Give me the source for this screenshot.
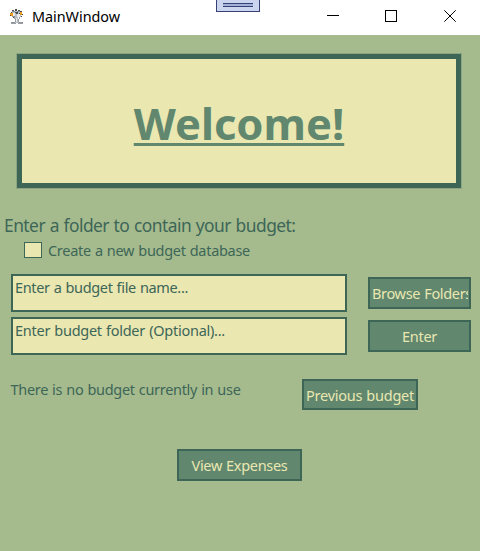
<script>
  // Sets the tracking of a label so that it spans the requested width.
  function track(node, width) {
    const range = document.createRange();
    range.selectNodeContents(node);
    const natural = range.getBoundingClientRect().width;
    node.style.letterSpacing = `${(width - natural) / node.textContent.length}px`;
  }
</script>

<main class="window">
  <header class="titlebar">
    <svg class="app-icon" width="16" height="16" viewBox="0 0 16 16" shape-rendering="crispEdges">
      <path fill="#b9bcc2" d="M3 2h9v6H9v5h4v1H2v-1h4V8H3z" />
      <path fill="#8d9299" d="M3 2h3v1H3zM8 2h4v1H8zM3 7h3v1H3zM9 7h2v1H9zM2 13h4v1H2zM10 13h4v1h-4z" />
      <path fill="#e9eaed" d="M4 4h2v3H4zM8 5h3v3H8zM7 9h1v4H7z" />
      <path fill="#4a4e55" d="M3 1h2v1H3zM6 0h2v2H6zM9 1h2v1H9zM11 2h2v1h-2zM2 3h1v1H2zM7 3h2v2H7zM6 3h1v1H6zM10 4h1v1h-1zM4 8h2v1H4zM12 7h1v1h-1z" />
      <path fill="#e9a01e" d="M1 4h3v3H1zM11 3h2v3h-2z" />
      <path fill="#5c3b20" d="M1 6h1v1H1zM13 5h1v1h-1z" />
      <path fill="#999da4" d="M5 8h1v2H5zM10 8h1v2h-1zM6 10h1v3H6zM9 10h1v3H9zM2 14h5v1H2zM9 14h5v1H9z" />
    </svg>
    <span class="title"><span use:track={88}>MainWindow</span></span>
    <div class="grip"><i></i></div>
    <svg class="controls" width="138" height="35" viewBox="0 0 138 35" fill="none" stroke="#000" shape-rendering="crispEdges">
      <path d="M-15 15.5h12" />
      <path d="M43.5 10.5h11v11h-11z" />
      <path d="M102.3 10.3l11.4 11.4M113.7 10.3l-11.4 11.4" shape-rendering="auto" />
    </svg>
  </header>

  <section class="hero"><h1 use:track={210.5}>Welcome!</h1></section>

  <h2><span use:track={291.5}>Enter a folder to contain your budget:</span></h2>
  <div class="check">
    <i class="box"></i>
    <span use:track={202}>Create a new budget database</span>
  </div>

  <div class="row first">
    <div class="field"><span use:track={173}>Enter a budget file name...</span></div>
    <button class="clipped"><b><span use:track={100}>Browse Folders</span></b></button>
  </div>
  <div class="row">
    <div class="field"><span use:track={210}>Enter budget folder (Optional)...</span></div>
    <button><span use:track={35}>Enter</span></button>
  </div>

  <div class="status">
    <p><span use:track={230}>There is no budget currently in use</span></p>
    <button class="previous"><span use:track={108}>Previous budget</span></button>
  </div>
  <button class="view"><span use:track={96}>View Expenses</span></button>
</main>

<style>
  :global(body) { margin: 0; }
  .window {
    width: 480px;
    height: 551px;
    overflow: hidden;
    background: #a5bb8e;
    color: #3d6657;
    font: 14.5px/20px "Noto Sans", "Open Sans", sans-serif;
    word-spacing: 0.6px;
    white-space: nowrap;
  }
  span { display: inline-block; }
  .titlebar {
    position: relative;
    display: flex;
    height: 35px;
    background: #fff;
    color: #000;
  }
  .app-icon { margin: 9px 0 0 9px; }
  .title { margin: 7px 0 0 7px; font-size: 14.4px; }
  .grip {
    position: absolute;
    left: 216px;
    top: 0;
    width: 42px;
    height: 11px;
    border: 1px solid #354273;
    border-top: 0;
    background: #ccd5f0;
  }
  .grip i {
    display: block;
    width: 30px;
    height: 2px;
    margin: 3px auto 0;
    border: solid #354273;
    border-width: 1px 0;
    background: #a3b1d9;
  }
  .controls { margin-left: auto; overflow: visible; }
  .hero {
    box-sizing: border-box;
    width: 444px;
    height: 134px;
    margin: 19px 0 0 17px;
    border: 5px solid #3d6657;
    background: #eae7b1;
    box-shadow: 0 0 0 1px #8da681;
    display: flex;
    justify-content: center;
  }
  h1 {
    align-self: flex-start;
    margin: 34px 0 0;
    color: #61876e;
    font-size: 43.5px;
    line-height: 60px;
    font-weight: 700;
    text-decoration: underline;
    text-decoration-thickness: 3px;
    text-underline-offset: 3px;
    text-decoration-skip-ink: none;
  }
  h2 {
    margin: 25px 0 0 4px;
    height: 25px;
    font-size: 17.4px;
    line-height: 24px;
    font-weight: 400;
  }
  .check {
    display: flex;
    height: 21px;
    margin: 2px 0 0 24px;
    gap: 6px;
  }
  .box {
    box-sizing: border-box;
    width: 18px;
    height: 16px;
    margin-top: 2px;
    border: 1px solid #3d6657;
    background: #eae7b1;
  }
  .row {
    display: flex;
    justify-content: space-between;
    align-items: center;
    height: 38px;
    margin: 5px 9px 0 11px;
  }
  .row.first { margin-top: 13px; }
  .field {
    box-sizing: border-box;
    width: 336px;
    height: 38px;
    padding: 1px 0 0 2px;
    border: 2px solid #3d6657;
    background: #eae7b1;
  }
  button {
    box-sizing: border-box;
    display: flex;
    justify-content: center;
    align-items: center;
    width: 103px;
    height: 32px;
    padding: 0;
    border: 2px solid #3d6657;
    border-radius: 0;
    background: #61876e;
    color: #eae7b1;
    font: inherit;
    word-spacing: inherit;
    white-space: nowrap;
  }
  .clipped { justify-content: flex-start; padding-left: 2px; }
  b { width: 96px; height: 20px; overflow: hidden; font-weight: 400; text-align: left; }
  .status {
    display: flex;
    justify-content: space-between;
    margin: 24px 62px 0 10px;
  }
  .status p { margin: 0 0 0 0.5px; }
  .previous { width: 116px; height: 31px; padding-top: 1px; }
  .view { width: 125px; margin: 39px 0 0 177px; }
</style>
